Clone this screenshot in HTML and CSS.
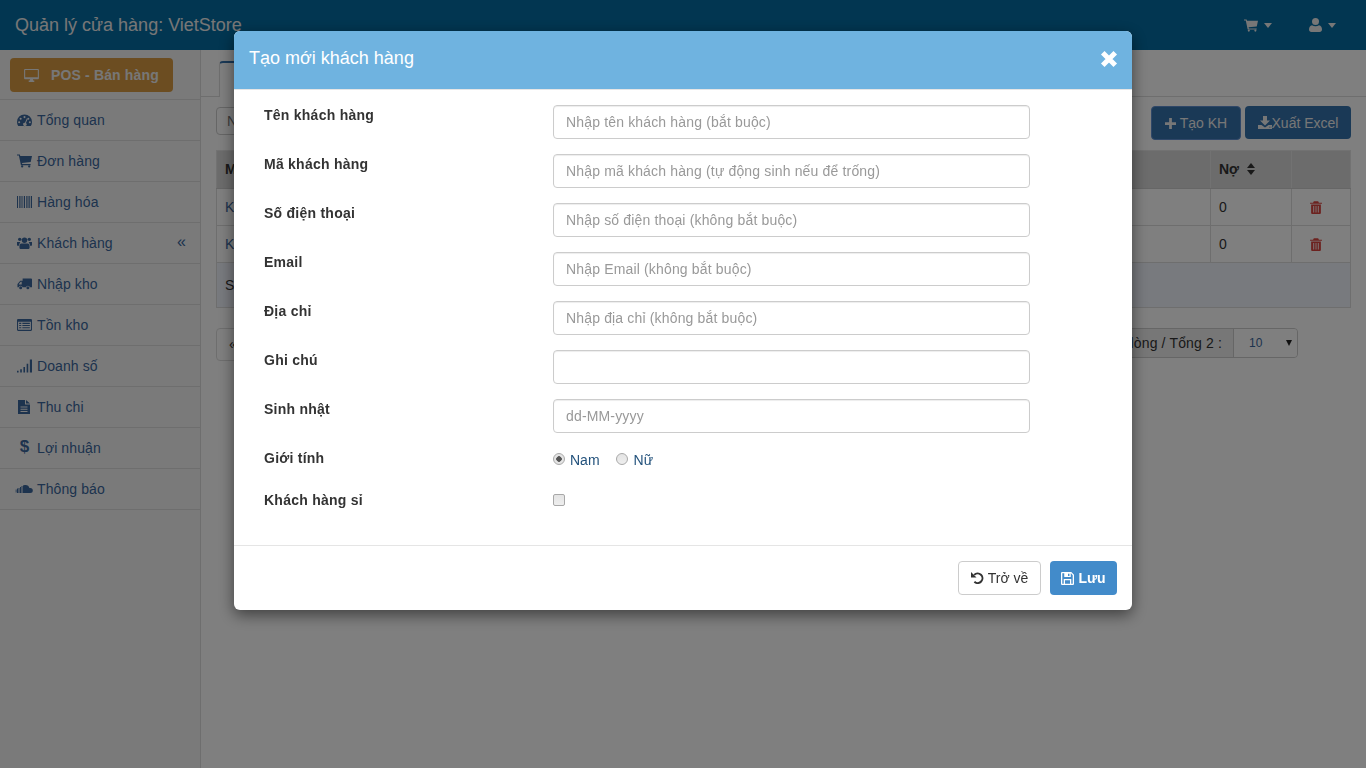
FILE: index.html
```html
<!DOCTYPE html>
<html lang="vi">
<head>
    <meta charset="UTF-8">
    <meta name="viewport" content="width=device-width, initial-scale=1.0">
    <title>Quản lý cửa hàng: VietStore</title>
    <link rel="stylesheet" href="styles.css">
</head>
<body>
    <svg class="sprite" xmlns="http://www.w3.org/2000/svg">
        <symbol id="i-desktop" viewBox="0 0 16 14"><path fill-rule="evenodd" d="M1 0h14a1 1 0 0 1 1 1v9a1 1 0 0 1-1 1H9.500l.4 1.500H11V14H5v-1.500h1.100l.4-1.500H1a1 1 0 0 1-1-1V1a1 1 0 0 1 1-1zM1.200 1.200v7.600h13.600V1.200z"/></symbol>
        <symbol id="i-gauge" viewBox="0 0 16 14"><path fill-rule="evenodd" d="M8 1a8 8 0 0 0-8 8c0 1.700.5 3.200 1.300 4.500h13.400C15.500 12.200 16 10.700 16 9a8 8 0 0 0-8-8zM8 2.800a1.100 1.100 0 1 1 0 2.200 1.100 1.100 0 0 1 0-2.200zM3.900 4.600a1.100 1.100 0 1 1 0 2.200 1.100 1.100 0 0 1 0-2.200zM12 4.600a1.100 1.100 0 1 1 0 2.200 1.100 1.100 0 0 1 0-2.200zM2.300 8.300a1.100 1.100 0 1 1 0 2.200 1.100 1.100 0 0 1 0-2.200zM13.700 8.300a1.100 1.100 0 1 1 0 2.200 1.100 1.100 0 0 1 0-2.200zM10.600 5.200l.9.400-2 4.700a1.800 1.800 0 1 1-1-.4z"/></symbol>
        <symbol id="i-cart" viewBox="0 0 16 14"><path d="M0 0h3l.5 1.700H16l-1.400 6.400-9.300 1 .3 1.200H14.500v1.200H4.200L2 1.200H0z"/><circle cx="5.500" cy="12.800" r="1.200"/><circle cx="13" cy="12.800" r="1.200"/></symbol>
        <symbol id="i-barcode" viewBox="0 0 15 12"><path d="M0 0h1v12H0zM2 0h.7v12H2zM3.500 0h1v12h-1zM5.500 0h.7v12h-.7zM7 0h1v12H7zM9 0h.7v12H9zM10.500 0h1v12h-1zM12.300 0h.7v12h-.7zM13.800 0H15v12h-1.200z"/></symbol>
        <symbol id="i-users" viewBox="0 0 16 13"><circle cx="8" cy="3.500" r="2.900"/><circle cx="2.900" cy="2.600" r="1.800"/><circle cx="13.100" cy="2.600" r="1.800"/><path d="M4.600 7h6.800c1.200 0 2 1.200 2 3v1.300c0 1-.7 1.700-1.700 1.700H4.300c-1 0-1.700-.7-1.700-1.700V10c0-1.800.8-3 2-3zM0 5.400h3.600c-.4.500-.9 1.300-1.200 2.500-.2.600-.2 1.100-.2 1.600H1c-.6 0-1-.4-1-1zM12.400 5.400H16v3.100c0 .6-.4 1-1 1h-1.200c0-.5 0-1-.2-1.600-.3-1.200-.8-2-1.200-2.500z"/></symbol>
        <symbol id="i-truck" viewBox="0 0 16 12"><path fill-rule="evenodd" d="M6 0h9a1 1 0 0 1 1 1v8.500h-2.200a2.200 2.200 0 0 0-4.300 0H6a2.200 2.200 0 0 0-4.300 0H.5V6l3-3.500H6zM4 3.700 2 6v.5h3V3.700z"/><circle cx="3.900" cy="10" r="1.600"/><circle cx="11.600" cy="10" r="1.600"/></symbol>
        <symbol id="i-list" viewBox="0 0 14 11"><path fill-rule="evenodd" d="M1 0h12a1 1 0 0 1 1 1v9a1 1 0 0 1-1 1H1a1 1 0 0 1-1-1V1a1 1 0 0 1 1-1zM1 2.500V10h12V2.500zM2 3.500h2v1H2zM5 3.500h7v1H5zM2 5.500h2v1H2zM5 5.500h7v1H5zM2 7.500h2v1H2zM5 7.500h7v1H5z"/></symbol>
        <symbol id="i-signal" viewBox="0 0 14 12"><path d="M0 10.500h1.500V12H0zM3 9h1.500v3H3zM6 7h1.500v5H6zM9 4h1.500v8H9zM12 0h2v12h-2z"/></symbol>
        <symbol id="i-file" viewBox="0 0 12 14"><path fill-rule="evenodd" d="M0 0h7v4.500h5V14H0zM8 0l4 3.500H8zM2.500 6.500V7.500h7V6.500zM2.500 8.700v1h7v-1zM2.500 10.900v1h7v-1z"/></symbol>
        <symbol id="i-cloud" viewBox="0 0 18 8"><path d="M10.500 0a4 4 0 0 1 3.900 3h.9a2.500 2.500 0 0 1 0 5H8V.6A4 4 0 0 1 10.500 0zM6.500 1h1v7h-1zM5 2h1v6H5zM3.500 3h1v5h-1zM2 3.500h1V8H2zM.7 4.500h.8V7.500H.7z"/></symbol>
        <symbol id="i-user" viewBox="0 0 13 14"><circle cx="6.500" cy="3.500" r="3.500"/><path d="M3 7.200c1 .7 2.200 1 3.500 1s2.500-.3 3.500-1c2 .3 3 2 3 4.300 0 1.500-1 2.500-2.400 2.500H2.400C1 14 0 13 0 11.500c0-2.300 1-4 3-4.300z"/></symbol>
        <symbol id="i-plus" viewBox="0 0 12 12"><path d="M4.500 0h3v4.500H12v3H7.500V12h-3V7.500H0v-3h4.500z"/></symbol>
        <symbol id="i-download" viewBox="0 0 14 13"><path fill-rule="evenodd" d="M5 0h4v4.500h3L7 9.500l-5-5h3zM0 9h3.500L7 11.500 10.500 9H14v4H0zM11 10.800v.8h.8v-.8zM12.500 10.800v.8h.8v-.8z"/></symbol>
        <symbol id="i-trash" viewBox="0 0 11 12"><path fill-rule="evenodd" d="M3.500.3h4l.7 1.200H11v1.100H0V1.500h2.800zM1 3.200h9V11a1 1 0 0 1-1 1H2a1 1 0 0 1-1-1zM3 4.500v6h.8v-6zM5.100 4.500v6h.8v-6zM7.200 4.500v6H8v-6z"/></symbol>
        <symbol id="i-undo" viewBox="0 0 13 12"><path d="M0 0v5.500h5.500z"/><path fill="none" stroke="currentColor" stroke-width="2" d="M3.200 2.900A4.800 4.800 0 1 1 3.400 9.800"/></symbol>
        <symbol id="i-save" viewBox="0 0 12 12"><path fill-rule="evenodd" d="M1 0h8.500L12 2.500V11a1 1 0 0 1-1 1H1a1 1 0 0 1-1-1V1a1 1 0 0 1 1-1zM1.200 1.200v9.600h1.300V6.500h7v4.300h1.300V3L9.200 1.200H9V4.500H3V1.200zM3.700 7.700v3.100h4.600V7.700zM6.500 1.500v2.200h1.300V1.500z"/></symbol>
    </svg>

    <nav class="navbar">
        <span class="brand">Quản lý cửa hàng: VietStore</span>
        <div class="nav-right">
            <span class="nav-drop"><svg class="nav-icon-cart"><use href="#i-cart"/></svg><i class="caret"></i></span>
            <span class="nav-drop"><svg class="nav-icon-user"><use href="#i-user"/></svg><i class="caret"></i></span>
        </div>
    </nav>

    <div class="shell">
        <aside class="sidebar">
            <div class="pos-wrap">
                <a class="btn-pos"><svg class="pos-icon"><use href="#i-desktop"/></svg>POS - Bán hàng</a>
            </div>
            <ul class="menu">
                <li><svg class="mi"><use href="#i-gauge"/></svg>Tổng quan</li>
                <li><svg class="mi"><use href="#i-cart"/></svg>Đơn hàng</li>
                <li><svg class="mi"><use href="#i-barcode"/></svg>Hàng hóa</li>
                <li><svg class="mi"><use href="#i-users"/></svg>Khách hàng<span class="menu-arrow">«</span></li>
                <li><svg class="mi"><use href="#i-truck"/></svg>Nhập kho</li>
                <li><svg class="mi"><use href="#i-list"/></svg>Tồn kho</li>
                <li><svg class="mi"><use href="#i-signal"/></svg>Doanh số</li>
                <li><svg class="mi mi-file"><use href="#i-file"/></svg>Thu chi</li>
                <li><span class="mi mi-dollar">$</span>Lợi nhuận</li>
                <li><svg class="mi mi-cloud"><use href="#i-cloud"/></svg>Thông báo</li>
            </ul>
        </aside>

        <main class="main">
            <div class="tabs"><a class="tab">Khách hàng</a></div>
            <div class="toolbar">
                <input class="search" placeholder="Nhập tên, mã khách hàng">
                <div class="toolbar-btns">
                    <a class="btn btn-primary btn-focus"><svg class="b-plus"><use href="#i-plus"/></svg>Tạo KH</a>
                    <a class="btn btn-primary btn-excel"><svg class="b-dl"><use href="#i-download"/></svg>Xuất Excel</a>
                </div>
            </div>
            <table class="grid">
                <colgroup><col><col class="col-no"><col class="col-del"></colgroup>
                <thead>
                    <tr><th>Mã</th><th>Nợ <span class="sort"><i></i><i></i></span></th><th></th></tr>
                </thead>
                <tbody>
                    <tr><td class="link">KH2</td><td>0</td><td class="del"><svg class="trash"><use href="#i-trash"/></svg></td></tr>
                    <tr><td class="link">KH1</td><td>0</td><td class="del"><svg class="trash"><use href="#i-trash"/></svg></td></tr>
                    <tr class="sum"><td colspan="3">Số lượng: 2</td></tr>
                </tbody>
            </table>
            <div class="pager">
                <a class="page-prev">«</a>
                <div class="page-size">
                    <span class="page-info">Số dòng / Tổng 2 :</span>
                    <span class="page-select">10<i class="select-arrow"></i></span>
                </div>
            </div>
        </main>
    </div>

    <div class="backdrop"></div>

    <div class="modal-wrap">
        <div class="modal">
            <header class="modal-head">
                <h4>Tạo mới khách hàng</h4>
                <svg class="close" viewBox="0 0 16 16"><path d="M3 3l10 10M13 3L3 13"/></svg>
            </header>
            <form class="modal-body">
                <div class="row"><label>Tên khách hàng</label><input placeholder="Nhập tên khách hàng (bắt buộc)"></div>
                <div class="row"><label>Mã khách hàng</label><input placeholder="Nhập mã khách hàng (tự động sinh nếu để trống)"></div>
                <div class="row"><label>Số điện thoại</label><input placeholder="Nhập số điện thoại (không bắt buộc)"></div>
                <div class="row"><label>Email</label><input placeholder="Nhập Email (không bắt buộc)"></div>
                <div class="row"><label>Địa chỉ</label><input placeholder="Nhập địa chỉ (không bắt buộc)"></div>
                <div class="row"><label>Ghi chú</label><input></div>
                <div class="row"><label>Sinh nhật</label><input placeholder="dd-MM-yyyy"></div>
                <div class="row row-radio">
                    <label>Giới tính</label>
                    <div class="radios">
                        <span class="radio-item"><input type="radio" name="gt" checked>Nam</span>
                        <span class="radio-item"><input type="radio" name="gt">Nữ</span>
                    </div>
                </div>
                <div class="row row-check"><label>Khách hàng sỉ</label><input type="checkbox"></div>
            </form>
            <footer class="modal-foot">
                <a class="btn btn-default"><svg class="b-undo"><use href="#i-undo"/></svg>Trở về</a>
                <a class="btn btn-save"><svg class="b-save"><use href="#i-save"/></svg>Lưu</a>
            </footer>
        </div>
    </div>
</body>
</html>
```

FILE: styles.css
```css
* {
    box-sizing: border-box;
}

html, body {
    height: 100%;
}

body {
    margin: 0;
    background-color: #fff;
    color: #333;
    font-family: "Liberation Sans", Arial, sans-serif;
    font-size: 14px;
    line-height: 20px;
    overflow: hidden;
}

.sprite {
    display: none;
}

svg {
    fill: currentColor;
}

/* top bar */
.navbar {
    display: flex;
    align-items: center;
    justify-content: space-between;
    height: 50px;
    background-color: #046ca2;
    color: #eee;
    padding-left: 15px;
}

.brand {
    font-size: 18px;
}

.nav-right {
    display: flex;
    padding-right: 30px;
    gap: 37px;
}

.nav-drop {
    display: flex;
    align-items: center;
    gap: 6px;
}

.nav-icon-cart {
    width: 14px;
    height: 13px;
}

.nav-icon-user {
    width: 13px;
    height: 14px;
}

.caret {
    border-top: 5px solid #eee;
    border-left: 4.5px solid transparent;
    border-right: 4.5px solid transparent;
}

/* page under the modal */
.shell {
    display: flex;
    height: calc(100% - 50px);
}

.sidebar {
    width: 201px;
    flex: none;
    background-color: #f5f5f5;
    border-right: 1px solid #ddd;
}

.pos-wrap {
    padding: 8px 10px 7px;
    border-bottom: 1px solid #ddd;
}

.btn-pos {
    display: flex;
    align-items: center;
    width: 163px;
    height: 34px;
    padding-left: 14px;
    background-color: #d99a42;
    border-radius: 4px;
    color: #eee;
    font-weight: bold;
    letter-spacing: 0.15px;
}

.pos-icon {
    width: 15px;
    height: 13px;
    margin-right: 12px;
}

.menu {
    list-style: none;
    margin: 0;
    padding: 0;
}

.menu li {
    display: flex;
    align-items: center;
    height: 41px;
    padding-left: 17px;
    border-bottom: 1px solid #ddd;
    color: #3a669c;
    letter-spacing: 0.1px;
    position: relative;
}

.mi {
    width: 15px;
    height: 14px;
    margin-right: 5px;
    flex: none;
}

.mi-file {
    width: 12px;
    height: 14px;
    margin-left: 1px;
    margin-right: 7px;
}

.mi-dollar {
    height: 20px;
    font-weight: bold;
    font-size: 17px;
    line-height: 18px;
    text-align: center;
}

.mi-cloud {
    width: 18px;
    height: 8px;
    margin-left: -2px;
    margin-right: 4px;
}

.menu-arrow {
    position: absolute;
    right: 14px;
    top: 9px;
    font-size: 16px;
}

.main {
    flex: 1;
    padding: 0 15px 0 15px;
    min-width: 0;
}

.tabs {
    height: 47px;
    margin: 0 -15px;
    padding: 11px 0 0 18px;
    border-bottom: 1px solid #ddd;
}

.tab {
    display: block;
    width: 120px;
    height: 36px;
    padding: 7px 15px;
    background-color: #fff;
    border: 1px solid #ddd;
    border-top: 2px solid #3572ad;
    border-bottom: none;
    border-radius: 4px 4px 0 0;
}

.toolbar {
    display: flex;
    align-items: flex-start;
    justify-content: space-between;
    margin-top: 9px;
    height: 34px;
}

.search {
    width: 300px;
    height: 28px;
    margin-top: 1px;
    padding: 0 10px;
    border: 1px solid #ccc;
    border-radius: 4px;
    font: inherit;
}

.toolbar-btns {
    display: flex;
    align-items: flex-start;
    gap: 4px;
}

.btn {
    display: flex;
    align-items: center;
    justify-content: center;
    height: 34px;
    border-radius: 4px;
    border: 1px solid transparent;
}

.btn-primary {
    background-color: #3572ad;
    color: #eee;
}

.btn-focus {
    width: 90px;
    border-color: #5f8fd0;
}

.btn-excel {
    width: 106px;
    height: 33px;
}

.b-plus {
    width: 11px;
    height: 11px;
    margin-right: 4px;
}

.b-dl {
    width: 14px;
    height: 13px;
}

.grid {
    width: 100%;
    margin-top: 10px;
    border-collapse: collapse;
    table-layout: fixed;
    background-color: #fff;
}

.col-no {
    width: 81px;
}

.col-del {
    width: 59px;
}

.grid th, .grid td {
    border: 1px solid #ddd;
    padding: 7px 8px 9px;
    text-align: left;
    height: 37px;
}

.grid td {
    padding: 8px;
}

.grid th {
    background-color: #d8d8d8;
    border-color: #e4e4e4;
    border-bottom-color: #ccc;
    height: 38px;
}

.link {
    color: #3a669c;
}

.grid .del {
    padding-left: 18px;
}

.trash {
    display: block;
    width: 12px;
    height: 13px;
    color: #d9443f;
}

.sum td {
    height: 45px;
    background-color: #f1f4fd;
}

.sort {
    display: inline-block;
    margin-left: 4px;
    vertical-align: -1px;
}

.sort i {
    display: block;
    width: 0;
    border-left: 4.5px solid transparent;
    border-right: 4.5px solid transparent;
}

.sort i:first-child {
    border-bottom: 5px solid #333;
    margin-bottom: 2px;
}

.sort i:last-child {
    border-top: 5px solid #333;
}

.pager {
    display: flex;
    justify-content: space-between;
    margin-top: 20px;
    padding-right: 53px;
}

.page-prev {
    width: 34px;
    height: 33px;
    padding: 5px 12px;
    background-color: #fff;
    border: 1px solid #ddd;
    border-radius: 4px;
}

.page-size {
    display: flex;
    height: 30px;
    border: 1px solid #ccc;
    border-radius: 4px;
    overflow: hidden;
    background-color: #eee;
}

.page-info {
    padding: 4px 11px 4px 12px;
    letter-spacing: 0.15px;
}

.page-select {
    position: relative;
    width: 64px;
    padding: 4px 15px;
    background-color: #fff;
    border-left: 1px solid #ccc;
    color: #3a669c;
    font-size: 12px;
}

.select-arrow {
    position: absolute;
    right: 5px;
    top: 11px;
    border-top: 6px solid #222;
    border-left: 3px solid transparent;
    border-right: 3px solid transparent;
}

/* modal */
.backdrop {
    position: fixed;
    inset: 0;
    background-color: rgba(0, 0, 0, 0.5);
}

.modal-wrap {
    position: fixed;
    inset: 0;
    display: flex;
    justify-content: center;
    align-items: flex-start;
    padding-top: 31px;
}

.modal {
    width: 898px;
    background-color: #fff;
    border-radius: 6px;
    box-shadow: 0 5px 15px rgba(0, 0, 0, 0.5);
}

.modal-head {
    display: flex;
    align-items: center;
    justify-content: space-between;
    height: 59px;
    padding: 0 15px 2px;
    background-color: #6fb3e0;
    border-bottom: 1px solid #e5e5e5;
    border-radius: 6px 6px 0 0;
    color: #fff;
}

.modal-head h4 {
    margin: 0 0 2px;
    font-size: 18px;
    font-weight: normal;
}

.close {
    width: 20px;
    height: 20px;
    margin-right: -2px;
    fill: none;
    stroke: #fff;
    stroke-width: 4;
}

.modal-body {
    padding: 15px 30px 0;
    height: 455px;
}

.row {
    display: flex;
    align-items: flex-start;
    margin-bottom: 15px;
}

.row label {
    width: 289px;
    flex: none;
    font-weight: bold;
    letter-spacing: 0.25px;
}

.row input:not([type]) {
    width: 477px;
    height: 34px;
    padding: 6px 12px;
    border: 1px solid #ccc;
    border-radius: 4px;
    box-shadow: inset 0 1px 1px rgba(0, 0, 0, 0.075);
    color: #555;
    font: inherit;
    letter-spacing: 0.16px;
}

.row input::placeholder {
    color: #999;
    opacity: 1;
}

.row-radio {
    height: 27px;
}

.radios {
    display: flex;
    gap: 16px;
    padding-top: 2px;
}

.radio-item {
    display: flex;
    align-items: center;
    color: #23527c;
}

.radio-item input, .row-check input {
    appearance: none;
    width: 12px;
    height: 12px;
    margin: 0 5px 0 0;
    border: 1px solid #a8a8a8;
    background: linear-gradient(#e4e4e4, #eee);
}

.radio-item input {
    margin-top: -3px;
    border-radius: 50%;
}

.radio-item:last-child input {
    margin-right: 6px;
}

.radio-item input:checked {
    background: radial-gradient(circle, #555 0, #555 2.5px, #e4e4e4 3px);
}

.row-check input {
    margin-top: 4px;
    border-radius: 2px;
}

.modal-foot {
    display: flex;
    justify-content: flex-end;
    gap: 9px;
    padding: 15px;
    border-top: 1px solid #e5e5e5;
}

.btn-default {
    width: 83px;
    background-color: #fff;
    border-color: #ccc;
    color: #333;
}

.btn-save {
    width: 67px;
    background-color: #428bca;
    color: #fff;
    font-weight: bold;
}

.b-undo {
    width: 13px;
    height: 12px;
    margin-right: 4px;
}

.b-save {
    width: 13px;
    height: 13px;
    margin-right: 4px;
}
```
